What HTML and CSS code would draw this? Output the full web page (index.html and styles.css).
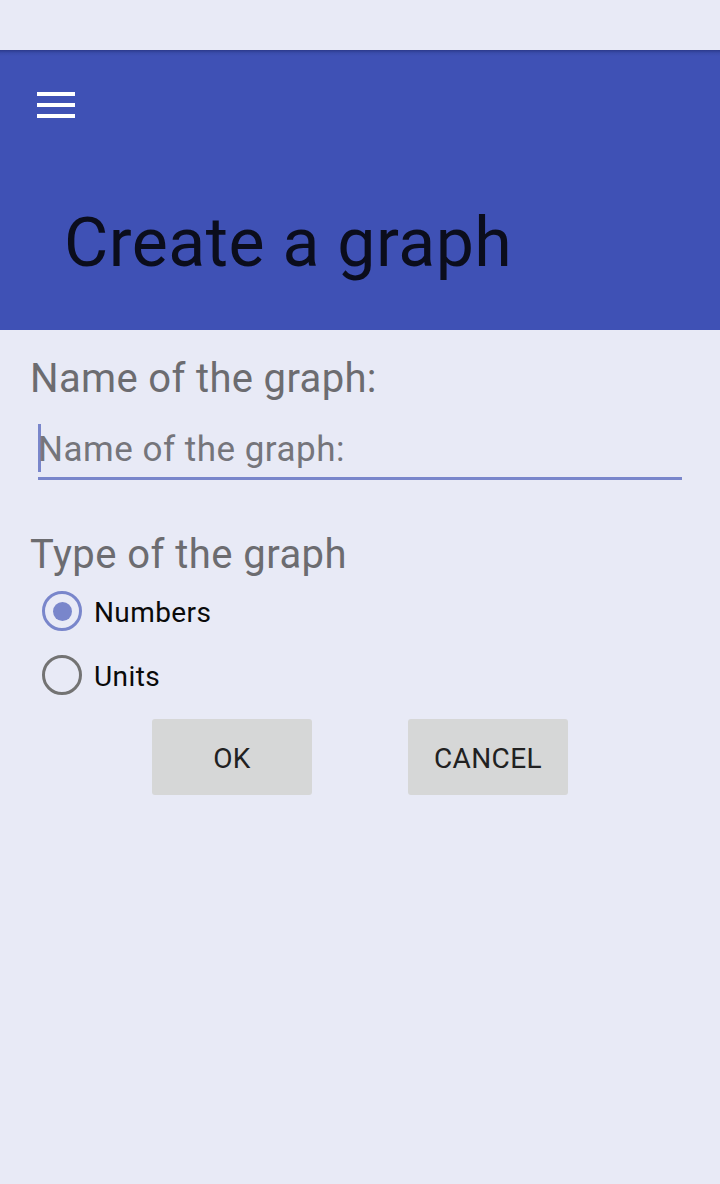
FILE: index.html
```html
<!DOCTYPE html>
<html>
<head>
<meta charset="utf-8">
<title>Create a graph</title>
<link rel="stylesheet" href="styles.css">
</head>
<body>
<div class="status-bar"></div>
<header class="app-bar">
  <div class="menu-btn">
    <svg width="38" height="26" viewBox="0 0 38 26">
      <rect x="0" y="0" width="38" height="4" fill="#ffffff"/>
      <rect x="0" y="11" width="38" height="4" fill="#ffffff"/>
      <rect x="0" y="22" width="38" height="4" fill="#ffffff"/>
    </svg>
  </div>
  <h1 class="title">Create a graph</h1>
</header>
<main class="content">
  <div class="label name-label">Name of the graph:</div>
  <div class="field">
    <span class="caret"></span>
    <span class="hint">Name of the graph:</span>
  </div>
  <div class="label type-label">Type of the graph</div>
  <div class="radio-group">
    <div class="radio-row">
      <span class="radio checked"><span class="dot"></span></span>
      <span class="radio-text">Numbers</span>
    </div>
    <div class="radio-row">
      <span class="radio"></span>
      <span class="radio-text">Units</span>
    </div>
  </div>
  <div class="buttons">
    <div class="btn">OK</div>
    <div class="btn">CANCEL</div>
  </div>
</main>
</body>
</html>
```
FILE: styles.css
```css
html, body {
  margin: 0;
  padding: 0;
}
body {
  background: #e8eaf6;
  font-family: Roboto, "Noto Sans", "Liberation Sans", sans-serif;
  width: 720px;
  height: 1184px;
  overflow: hidden;
}
.status-bar {
  height: 50px;
  background: #e8eaf6;
}
.app-bar {
  height: 280px;
  box-sizing: border-box;
  background: linear-gradient(#2c3a8c 0px, #3a4cab 3px, #3f51b5 6px);
  padding: 42px 0 0 37px;
  display: flex;
  flex-direction: column;
}
.menu-btn {
  width: 38px;
  height: 26px;
}
.menu-btn svg {
  display: block;
}
.title {
  margin: 85px 0 0 27px;
  font-weight: 400;
  font-size: 68px;
  line-height: 80px;
  letter-spacing: 0.5px;
  color: #0b0d1c;
}
.content {
  padding: 25px 0 0 30px;
  display: flex;
  flex-direction: column;
}
.label {
  font-size: 40px;
  line-height: 48px;
  letter-spacing: 0.35px;
  color: #6c6c70;
}
.field {
  margin: 21px 0 0 8px;
  width: 644px;
  height: 53px;
  border-bottom: 3px solid #7986cb;
  display: flex;
  align-items: flex-start;
}
.caret {
  width: 3px;
  height: 48px;
  background: #7986cb;
  flex: none;
}
.hint {
  font-size: 35px;
  line-height: 48px;
  letter-spacing: 0.5px;
  margin-top: 2px;
  margin-left: -3px;
  color: #75757b;
}
.type-label {
  margin-top: 51px;
  letter-spacing: 0.45px;
}
.radio-group {
  display: flex;
  flex-direction: column;
}
.radio-row {
  height: 64px;
  display: flex;
  align-items: center;
  padding-left: 12px;
}
.radio {
  width: 40px;
  height: 40px;
  box-sizing: border-box;
  border: 3.5px solid #737373;
  border-radius: 50%;
  display: flex;
  align-items: center;
  justify-content: center;
  flex: none;
}
.radio.checked {
  border-color: #7986cb;
}
.dot {
  width: 19px;
  height: 19px;
  border-radius: 50%;
  background: #7986cb;
}
.radio-text {
  margin-left: 12px;
  font-size: 28px;
  letter-spacing: 0.4px;
  padding-top: 2px;
  color: #0a0a0a;
}
.buttons {
  margin: 12px 0 0 -30px;
  display: flex;
  justify-content: center;
  gap: 96px;
}
.btn {
  width: 160px;
  height: 76px;
  box-sizing: border-box;
  padding-top: 3px;
  background: #d6d7d7;
  border-radius: 3px;
  display: flex;
  align-items: center;
  justify-content: center;
  font-size: 28px;
  letter-spacing: 0.4px;
  color: #212121;
}
```
